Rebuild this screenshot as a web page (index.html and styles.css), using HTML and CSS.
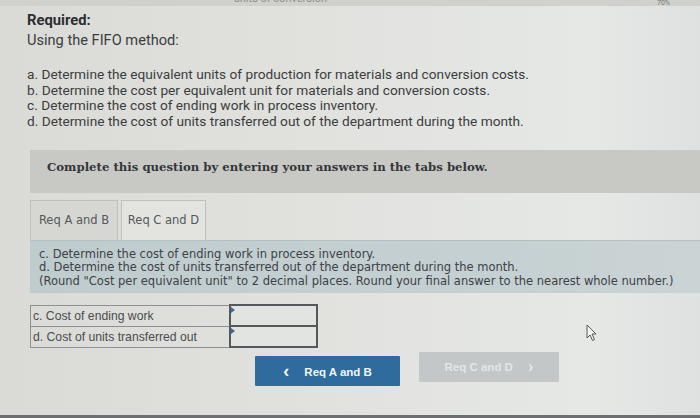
FILE: index.html
```html
<!DOCTYPE html>
<html>
<head>
	<title>Required</title>
	<link rel="stylesheet" href="styles.css">
</head>
<body>
	<div class="topbar">
		<span class="cut">units of conversion</span>
		<span class="zoom">70%</span>
	</div>
	<div class="page">
		<h3>Required:</h3>
		<p class="intro">Using the FIFO method:</p>
		<ol class="steps">
			<li>a. Determine the equivalent units of production for materials and conversion costs.</li>
			<li>b. Determine the cost per equivalent unit for materials and conversion costs.</li>
			<li>c. Determine the cost of ending work in process inventory.</li>
			<li>d. Determine the cost of units transferred out of the department during the month.</li>
		</ol>
		<div class="notice">Complete this question by entering your answers in the tabs below.</div>
		<div class="tabs">
			<button class="tab">Req A and B</button>
			<button class="tab active">Req C and D</button>
		</div>
		<div class="panel">
			<p>c. Determine the cost of ending work in process inventory.</p>
			<p>d. Determine the cost of units transferred out of the department during the month.</p>
			<p>(Round "Cost per equivalent unit" to 2 decimal places. Round your final answer to the nearest whole number.)</p>
		</div>
		<table class="answers">
			<tr>
				<td class="label">c. Cost of ending work</td>
				<td class="input"><span class="mark"></span></td>
			</tr>
			<tr>
				<td class="label">d. Cost of units transferred out</td>
				<td class="input"><span class="mark"></span></td>
			</tr>
		</table>
		<div class="nav">
			<button class="prev"><span class="chev">&lsaquo;</span> Req A and B</button>
			<button class="next">Req C and D <span class="chev">&rsaquo;</span></button>
		</div>
	</div>
	<svg class="cursor" width="12" height="18" viewBox="0 0 12 18">
		<path d="M1 1 L1 14 L4 11 L6.5 16.5 L8.5 15.5 L6 10 L10 10 Z" fill="#f4f4f2" stroke="#55575a" stroke-width="1"/>
	</svg>
</body>
</html>
```

FILE: styles.css
```css
body {
	margin: 0;
	font-family: 'Roboto', 'Liberation Sans', sans-serif;
	color: #3b3d3f;
	background: linear-gradient(90deg, #dadbd6 0%, #e1e2de 45%, #e6e8e6 85%, #dfe1e1 100%);
	height: 418px;
	overflow: hidden;
	position: relative;
	border-bottom: 3px solid #6e6f70;
	box-sizing: border-box;
}

.topbar {
	height: 6px;
	background: #d0d1cd;
	position: relative;
	overflow: hidden;
	font-size: 11px;
	color: #8e908e;
}

.topbar .cut {
	position: absolute;
	right: 373px;
	top: -8px;
}

.topbar .zoom {
	position: absolute;
	right: 30px;
	top: 0;
	font-size: 7px;
	line-height: 7px;
	color: #74777a;
}

.page {
	padding: 5px 0 0 27px;
}

h3 {
	margin: 0;
	font-size: 14.8px;
	font-weight: 700;
	line-height: 18px;
	color: #2d2f31;
}

.intro {
	margin: 2px 0 0;
	font-size: 14.6px;
	line-height: 18px;
}

.steps {
	list-style: none;
	margin: 18px 0 0;
	padding: 0;
	font-size: 13.7px;
	line-height: 15.7px;
}

.notice {
	margin: 20px 0 0 3px;
	height: 43px;
	line-height: 34px;
	padding-left: 17px;
	background: #c8c9c4;
	font-family: 'DejaVu Serif', serif;
	font-weight: 700;
	font-size: 11.7px;
	color: #34363a;
}

.tabs {
	display: flex;
	margin: 7px 0 0 3px;
	gap: 3px;
	align-items: flex-end;
}

.tab {
	font-family: 'DejaVu Sans', sans-serif;
	font-size: 11.5px;
	color: #55585b;
	background: #d6d7d3;
	border: 1px solid #bfc0bc;
	border-bottom: none;
	height: 40px;
	padding: 0;
	width: 88px;
	margin: 0;
}

.tab.active {
	background: #e3e4e0;
	width: 85px;
}

.panel {
	margin-left: 3px;
	padding: 7px 9px 5px;
	background: linear-gradient(90deg, #bfccce 0%, #c5d0d2 70%, #cbd4d5 100%);
	font-family: 'DejaVu Sans', sans-serif;
	font-size: 11.5px;
	line-height: 13.5px;
	color: #3e4145;
	border-top: 1px solid #b7c0c1;
}

.panel p {
	margin: 0;
	white-space: nowrap;
}

.answers {
	margin: 11px 0 0 3px;
	border-collapse: collapse;
	font-family: 'Liberation Sans', sans-serif;
	font-size: 12.2px;
	color: #4a4c4f;
}

.answers td {
	border: 1px solid #8e9092;
	height: 19px;
	padding: 0 2px;
}

.answers .label {
	width: 194px;
}

.answers .input {
	width: 81px;
	border: 2px solid #55585c;
	background: #e2e4e2;
	position: relative;
	vertical-align: top;
}

.mark {
	position: absolute;
	left: 0;
	top: 1px;
	width: 0;
	height: 0;
	border-top: 3px solid transparent;
	border-bottom: 3px solid transparent;
	border-left: 4px solid #3c6aa0;
}

.nav {
	display: flex;
	gap: 19px;
	margin: 4px 0 0 228px;
	align-items: flex-start;
}

.nav button {
	font-family: 'Liberation Sans', sans-serif;
	font-weight: 700;
	font-size: 11.5px;
	border: none;
	padding: 0;
	height: 30px;
	border-radius: 1px;
}

.prev {
	margin-top: 4px;
	width: 145px;
	background: #2f6b9d;
	color: #f2f5f8;
}

.prev .chev {
	font-size: 18px;
	margin-right: 12px;
	vertical-align: -1px;
}

.next {
	width: 140px;
	background: #c4c7c8;
	color: #e3e6e7;
	font-weight: 400;
	font-size: 11px;
}

.next .chev {
	font-size: 16px;
	margin-left: 12px;
	vertical-align: -1px;
}

.cursor {
	position: absolute;
	left: 586px;
	top: 324px;
}
```
